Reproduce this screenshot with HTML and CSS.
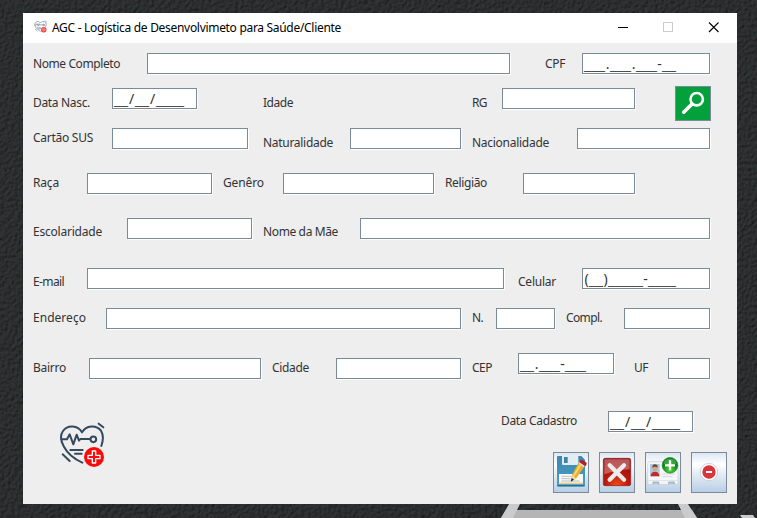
FILE: index.html
```html
<!DOCTYPE html>
<html lang="pt-BR">
<head>
<meta charset="utf-8">
<title>AGC - Logística de Desenvolvimeto para Saúde/Cliente</title>
<link rel="stylesheet" href="styles.css">
</head>
<body>
<svg class="wallpaper" viewBox="0 0 757 518" aria-hidden="true">
  <filter id="leather" x="0" y="0" width="100%" height="100%">
    <feTurbulence type="fractalNoise" baseFrequency="0.3" numOctaves="4" seed="7" result="n"/>
    <feDiffuseLighting in="n" surfaceScale="1.6" diffuseConstant="1" lighting-color="#303436">
      <feDistantLight azimuth="225" elevation="52"/>
    </feDiffuseLighting>
  </filter>
  <rect width="757" height="518" filter="url(#leather)"/>
  <path d="M501 518l5-8h186l5 8z" fill="#b5b5b5"/>
  <path d="M509 504h11l-3 6-4 8h-12zM678 504h10l9 14h-12zM740 515h13l2 3h-13z" fill="#cbcbcd"/>
</svg>
<main class="window">
  <header class="titlebar">
    <svg class="app-icon" viewBox="84 63 144 144"><use href="#heart"/></svg>
    <h1 data-w="289">AGC - Logística de Desenvolvimeto para Saúde/Cliente</h1>
    <svg class="controls" viewBox="0 0 104 12" shape-rendering="crispEdges">
      <path d="M0 5.5h10" stroke="#000"/>
      <path d="M45.500.5h9v9h-9z" fill="none" stroke="#ccc"/>
      <path d="M91 .5l9.500 9.500M100.500 .5L91 10" stroke="#000" stroke-width="1.100" shape-rendering="auto"/>
    </svg>
  </header>
  <form class="form">
    <div class="row r1">
      <label><span data-w="87">Nome Completo</span></label><div class="field"></div>
      <label><span data-w="20">CPF</span></label><div class="field">___<i>.</i>___<i>.</i>___<i>-</i>__</div>
    </div>
    <div class="row r2">
      <label><span data-w="57">Data Nasc.</span></label><div class="field">__<b>/</b>__<b>/</b>____</div>
      <label><span data-w="30">Idade</span></label><output></output>
      <label><span data-w="15">RG</span></label><div class="field"></div>
      <button type="button" class="search" aria-label="Pesquisar">
        <svg viewBox="0 0 36 35"><circle cx="21.700" cy="13.200" r="6.200" fill="none" stroke="#fff" stroke-width="2.600"/><path d="M17 18l-8.300 8.200" stroke="#fff" stroke-width="3.600" stroke-linecap="round"/></svg>
      </button>
    </div>
    <div class="row r3">
      <label><span data-w="60">Cartão SUS</span></label><div class="field"></div>
      <label class="low"><span data-w="70">Naturalidade</span></label><div class="field"></div>
      <label class="low"><span data-w="77">Nacionalidade</span></label><div class="field"></div>
    </div>
    <div class="row r4">
      <label><span data-w="26">Raça</span></label><div class="field"></div>
      <label><span data-w="41">Genêro</span></label><div class="field"></div>
      <label><span data-w="42">Religião</span></label><div class="field"></div>
    </div>
    <div class="row r5">
      <label><span data-w="69">Escolaridade</span></label><div class="field"></div>
      <label><span data-w="75">Nome da Mãe</span></label><div class="field"></div>
    </div>
    <div class="row r6">
      <label><span data-w="31">E-mail</span></label><div class="field"></div>
      <label><span data-w="38">Celular</span></label><div class="field"><i>(</i>__<i>)</i>_____<i>-</i>____</div>
    </div>
    <div class="row r7">
      <label><span data-w="53">Endereço</span></label><div class="field"></div>
      <label><span data-w="11">N.</span></label><div class="field"></div>
      <label><span data-w="36">Compl.</span></label><div class="field"></div>
    </div>
    <div class="row r8">
      <label><span data-w="33">Bairro</span></label><div class="field"></div>
      <label><span data-w="37">Cidade</span></label><div class="field"></div>
      <label><span data-w="20">CEP</span></label><div class="field raised">__<i>.</i>___<i>-</i>___</div>
      <label><span data-w="14">UF</span></label><div class="field"></div>
    </div>
    <div class="footer">
      <svg class="logo" viewBox="84 63 144 144">
        <g id="heart" fill="none" stroke="#34495e" stroke-width="6" stroke-linecap="round" stroke-linejoin="round">
          <path d="M157 188C136 179 112 160 101 139C92 122 91 104 99 93C113 74 143 75 156 97C169 75 199 74 213 92C221 105 220 121 214 138"/>
          <path d="M94 118h17l8-15 11 30 10-29 7 18 4-5h29"/>
          <circle cx="190" cy="118" r="8.500"/>
          <path d="M121 150h37M135 161h20M98 163l21 20M206 71l14 11"/>
          <circle cx="192" cy="171" r="30" fill="#f80b0b" stroke="none"/>
          <path d="M187 153h10v13h13v10h-13v13h-10v-13h-13v-10h13z" stroke="#fff" stroke-width="4"/>
        </g>
      </svg>
      <div class="finish">
        <div class="row r9">
          <label><span data-w="76">Data Cadastro</span></label><div class="field">__<b>/</b>__<b>/</b>____</div>
        </div>
        <div class="actions">
          <button type="button" aria-label="Salvar"><svg viewBox="0 0 108 123">
            <defs><linearGradient id="disk" x2="0" y2="1"><stop stop-color="#3c87af"/><stop offset="1" stop-color="#49a0c6"/></linearGradient></defs>
            <path d="M15 12h70l11 11v77q0 4-4 4H16q-4 0-4-4V15q0-3 3-3z" fill="url(#disk)"/>
            <path d="M13 101h82" stroke="#27647f" stroke-width="3"/>
            <path d="M27 12h49v24q0 3-3 3H30q-3 0-3-3z" fill="#e3edf1"/><path d="M33 15h11v18H33z" fill="#3b83a7"/>
            <path d="M18 66h72v30H18z" fill="#fafafa"/><path d="M18 94h72" stroke="#e8cf91" stroke-width="5"/>
            <path d="M25 73h35M25 80h28M25 87h55" stroke="#9ba2aa" stroke-width="2"/>
            <path d="M80 26l17 13-28 41-15 7 4-20z" fill="#e9b02f"/><path d="M85 34l-23 38" stroke="#ffda70" stroke-width="5"/>
            <path d="M77 34l15 12 4-6-15-12z" fill="#ddd"/>
            <path d="M81 26q3-5 8-2l10 7q4 3 1 8l-3 4-19-13z" fill="#b51f2b"/>
            <path d="M58 69l11 10-15 9z" fill="#f2d8a2"/><path d="M56 78l7 5-10 6z" fill="#292929"/>
          </svg></button>
          <button type="button" aria-label="Cancelar"><svg viewBox="0 0 108 123">
            <defs><radialGradient id="red" cy="1" r=".9"><stop stop-color="#f05012"/><stop offset=".45" stop-color="#c01b0b"/><stop offset="1" stop-color="#970c0c"/></radialGradient></defs>
            <rect x="13" y="19" width="82" height="82" rx="5" fill="url(#red)" stroke="#8c1717" stroke-width="2"/>
            <path d="M16 22h76v30Q54 53 16 67z" fill="#fff" opacity=".32"/>
            <path d="M32 40l43 43M75 40L32 83" stroke="#ececec" stroke-width="13" stroke-linecap="round"/>
          </svg></button>
          <button type="button" aria-label="Adicionar"><svg viewBox="0 0 108 123">
            <defs><radialGradient id="green" cy=".8"><stop stop-color="#58da38"/><stop offset="1" stop-color="#088718"/></radialGradient></defs>
            <rect x="8" y="29" width="91" height="68" rx="5" fill="#f5f6f8" stroke="#c6cdd5" stroke-width="2"/>
            <path d="M9 86h89" stroke="#dce0e5" stroke-width="3"/>
            <path d="M24 97v-7h17v7M71 97v-7h17v7" fill="#b5cadb" stroke="#8b9eaf" stroke-width="2"/>
            <path d="M15 36h29v37H15z" fill="#abc8e9"/><path d="M17 73q0-14 13-14t13 14z" fill="#c32b26"/><ellipse cx="30" cy="49" rx="7" ry="9" fill="#dda878"/><path d="M22 47q0-10 8-10t8 10q-8-6-16 0z" fill="#70472c"/>
            <path d="M52 66h38M52 74h30" stroke="#d3d9e1" stroke-width="3"/>
            <circle cx="75" cy="40" r="23.500" fill="url(#green)" stroke="#168221" stroke-width="2"/>
            <path d="M56 35q3-15 19-15t19 15q-19 9-38 0z" fill="#fff" opacity=".22"/>
            <path d="M75 25v30M60 40h30" stroke="#fff" stroke-width="7"/>
          </svg></button>
          <button type="button" aria-label="Remover"><svg viewBox="0 0 108 123">
            <circle cx="54" cy="60" r="26" fill="#fff" stroke="#bdc1c6" stroke-width="2"/><circle cx="54" cy="60" r="20" fill="#d9353d"/><path d="M45 60h18" stroke="#fff" stroke-width="6"/>
          </svg></button>
        </div>
      </div>
    </div>
  </form>
</main>
<script src="fit.js"></script>
</body>
</html>
```
FILE: styles.css
```css
* { box-sizing: border-box; }
body { margin: 0; height: 518px; overflow: hidden; background: #2b2f31; padding: 13px 20px 14px 23px; }
.wallpaper { position: absolute; inset: 0; width: 757px; height: 518px; }
.window { position: relative; width: 714px; height: 491px; background: #eee; font: 12px/16px "Noto Sans", "Open Sans", sans-serif; color: #333; }
.titlebar { display: flex; height: 30px; background: #fff; color: #000; padding-left: 10px; }
.titlebar h1 { margin: 6px 0 0 4px; font: inherit; line-height: 17px; white-space: nowrap; align-self: flex-start; }
.app-icon { width: 13px; height: 13px; margin: 7px 1px 0; flex: none; opacity: .85; }
.controls { width: 104px; height: 12px; margin: 9px 15px 0 auto; }
.form { padding: 10px 10px 0; }
.row { display: grid; align-items: start; }
.row > :nth-child(3) { grid-column: 4; }
.row > :nth-child(4) { grid-column: 5; }
.row > :nth-child(5) { grid-column: 7; }
.row > :nth-child(6) { grid-column: 8; }
.row > :nth-child(7) { grid-column: 10; }
.row > :nth-child(8) { grid-column: 11; }
.row > * { grid-row: 1; }
.r1 { height: 35px; grid-template-columns: 114px 363px 35px 37px 128px; }
.r2 { height: 40px; grid-template-columns: 79px 85px 66px 40px 169px 0 30px 133px 40px 36px; }
.r3 { height: 45px; grid-template-columns: 79px 136px 15px 87px 111px 11px 105px 133px; }
.r4 { height: 45px; grid-template-columns: 54px 125px 11px 60px 151px 11px 78px 112px; }
.r5 { height: 50px; grid-template-columns: 94px 125px 11px 97px 350px; }
.r6 { height: 40px; grid-template-columns: 54px 417px 14px 64px 128px; }
.r7 { height: 50px; grid-template-columns: 73px 355px 11px 24px 59px 11px 58px 86px; }
.r8 { height: 53px; grid-template-columns: 56px 172px 11px 64px 125px 11px 46px 96px 20px 34px 42px; }
.r9 { height: 41px; grid-template-columns: 107px 85px; }
label { display: block; padding-top: 2px; white-space: nowrap; }
.r1 label { padding-top: 3px; }
.r2 label, .row .low { padding-top: 7px; }
.r5 label, .r6 label { padding-top: 6px; }
label span { display: inline-block; }
.field { height: 21px; background: #fff; border: 1px solid #7a8a99; box-shadow: 1px 1px 0 #fff; padding: 2px 0 0 1px; font: 12.600px/16px "Liberation Sans", sans-serif; white-space: nowrap; }
.field i, .field b { display: inline-block; font: 14px/16px "Noto Sans", sans-serif; text-align: center; vertical-align: baseline; }
.field i { width: 5px; }
.field b { width: 7px; }
.raised { margin-top: -5px; }
button { display: block; padding: 0; border: 1px solid #7a8a99; width: 36px; height: 41px; background: linear-gradient(#dde8f3, #fff 30%, #e8eff6 50%, #b8cfe5); }
button svg { display: block; width: 36px; height: 41px; margin: -1px; }
.search { height: 35px; margin-top: -2px; background: #04a03c; }
.search svg { height: 35px; }
.footer { display: flex; }
.logo { width: 48px; height: 48px; margin: 10px 395px 0 25px; flex: none; }
.actions { display: flex; gap: 10px; margin-left: 52px; }
```
FILE: fit.js
```js
// Spread each caption's letters so that it fills its nominal width.
document.querySelectorAll('[data-w]').forEach(function (el) {
  var spare = Number(el.dataset.w) - el.getBoundingClientRect().width;
  el.style.letterSpacing = spare / el.textContent.length + 'px';
});
```
